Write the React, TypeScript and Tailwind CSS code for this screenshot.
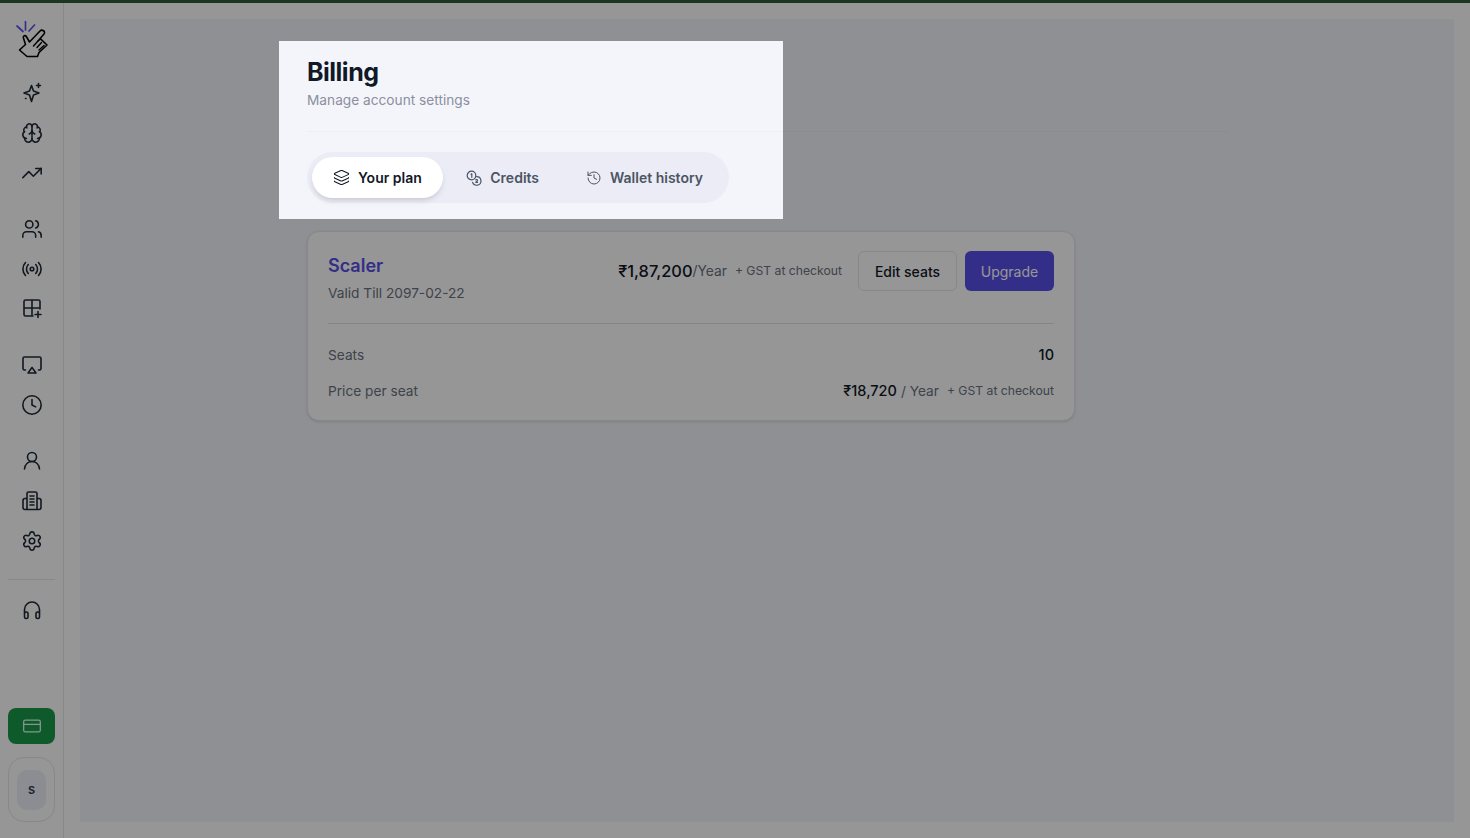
import React from "react";
import { Brain, TrendingUp, Users, Clock, Settings, CreditCard, Layers, History } from "lucide-react";

const ic = "w-[22px] h-[22px] text-[#1f2937]";

function Logo() {
  return (
    <svg width="36" height="40" viewBox="13.500 20 36 40" fill="none" strokeLinecap="round" strokeLinejoin="round">
      <path d="M16.500 26 22.500 31.500M25 21.700V30M34 25 28.500 31" stroke="#5b54f0" strokeWidth="1.700" />
      <path d="M19 50 25 44.500 22.800 37.500C22.500 35.800 24.800 35 25.800 36.500L29 42 39.500 31C41.500 28.800 45.500 31.500 43.500 34L37.500 41 40 38.800 46.500 45 38.500 52.500 37 56.500H26.500Z" stroke="#000" strokeWidth="1.600" />
      <path d="M37.500 41 33 46M41 42.500 36.500 47.500M43.500 45.500 38.500 50" stroke="#000" strokeWidth="1.400" />
    </svg>
  );
}

function Svg({ children, className }: { children: React.ReactNode; className?: string }) {
  return (
    <svg width="22" height="22" viewBox="-1 -1 22 22" fill="none" stroke="#1f2937" strokeWidth="1.600" strokeLinecap="round" strokeLinejoin="round" className={className}>
      {children}
    </svg>
  );
}

function Spark() {
  return (
    <Svg>
      <path d="M9.500 2.500 11.500 8 17 10 11.500 12 9.500 18.500 7.500 12 2 10 7.500 8Z" />
      <path d="M16.500 0.500v4M14.500 2.500h4M3.500 15.500h.5" />
    </Svg>
  );
}

function RadioIcon() {
  return (
    <Svg>
      <circle cx="10" cy="10" r="1.800" />
      <path d="M6.300 5.500a6.500 6.500 0 0 0 0 9M13.700 5.500a6.500 6.500 0 0 1 0 9M3.500 3.500a9.500 9.500 0 0 0 0 13M16.500 3.500a9.500 9.500 0 0 1 0 13" />
    </Svg>
  );
}

function GridPlus() {
  return (
    <Svg>
      <path d="M11 17H3.500A1.500 1.500 0 0 1 2 15.500v-13A1.500 1.500 0 0 1 3.500 1h13A1.500 1.500 0 0 1 18 2.500V10M2 9h16M10 1v16M16 12.500v6M13 15.500h6" />
    </Svg>
  );
}

function Airplay() {
  return (
    <Svg>
      <path d="M3.500 15H2.500A1.500 1.500 0 0 1 1 13.500v-10A1.500 1.500 0 0 1 2.500 2h15A1.500 1.500 0 0 1 19 3.500v10a1.500 1.500 0 0 1-1.500 1.500h-1M10 12.500l4 5.500H6l4-5.500Z" />
    </Svg>
  );
}

function UserIcon() {
  return (
    <Svg>
      <circle cx="10" cy="6" r="4.500" />
      <path d="M2.500 18c.5-4.500 3.500-7.500 7.500-7.500s7 3 7.500 7.500" />
    </Svg>
  );
}

function Building() {
  return (
    <Svg>
      <path d="M5 18.500V2.500A1.500 1.500 0 0 1 6.500 1h7A1.500 1.500 0 0 1 15 2.500v16M5 7.500H3A2 2 0 0 0 1 9.500v7a2 2 0 0 0 2 2h14a2 2 0 0 0 2-2v-7a2 2 0 0 0-2-2h-2M8 5h4M8 8h4M8 11h4M8 14h4" />
    </Svg>
  );
}

function Phones() {
  return (
    <Svg>
      <path d="M2.500 13V9.500a7.500 7.500 0 0 1 15 0V13" />
      <path d="M2.500 13.500A1.500 1.500 0 0 1 4 12h.5A1.500 1.500 0 0 1 6 13.500V17a1.500 1.500 0 0 1-1.500 1.500H4A1.500 1.500 0 0 1 2.500 17ZM17.500 13.500A1.500 1.500 0 0 0 16 12h-.5A1.500 1.500 0 0 0 14 13.500V17a1.500 1.500 0 0 0 1.500 1.500h.5a1.500 1.500 0 0 0 1.500-1.500Z" />
    </Svg>
  );
}

function Coins() {
  return (
    <svg width="16" height="16" viewBox="0 0 16 16" fill="none" stroke="#4b5563" strokeWidth="1.200" strokeLinecap="round" strokeLinejoin="round">
      <circle cx="5.500" cy="5.500" r="4.300" />
      <path d="M5 4.200l.8-.5v3.600M10.600 6.600a4.300 4.300 0 1 1-4 5.800M9.800 9.800a1 1 0 0 1 1.700.7c0 .6-1.700 1.800-1.700 1.800h1.800" />
    </svg>
  );
}

function NavGroup({ children }: { children: React.ReactNode }) {
  return <div className="flex flex-col gap-[18px] items-center">{children}</div>;
}

function Sidebar() {
  return (
    <aside className="w-[64px] shrink-0 border-r border-[#e5e7eb] bg-white flex flex-col items-center">
      <div className="mt-[17px] h-[40px] flex items-center justify-center">
        <Logo />
      </div>
      <div className="mt-[22px] flex flex-col items-center gap-[34px]">
        <NavGroup>
          <Spark />
          <Brain className={ic} strokeWidth={1.7} />
          <TrendingUp className={ic} strokeWidth={1.7} />
        </NavGroup>
        <NavGroup>
          <Users className={ic} strokeWidth={1.7} />
          <RadioIcon />
          <GridPlus />
        </NavGroup>
        <NavGroup>
          <Airplay />
          <Clock className={ic} strokeWidth={1.7} />
        </NavGroup>
        <NavGroup>
          <UserIcon />
          <Building />
          <Settings className={ic} strokeWidth={1.7} />
        </NavGroup>
      </div>
      <div className="w-[47px] h-px bg-[#e5e7eb] mt-[27px]" />
      <div className="mt-[19px]">
        <Phones />
      </div>
      <div className="mt-auto w-[47px] h-[36px] rounded-[8px] bg-[#189a4a] flex items-center justify-center">
        <CreditCard className="w-[20px] h-[20px] text-[#e6fff0]" strokeWidth={1.5} />
      </div>
      <div className="mt-[13px] mb-[16px] w-[47px] h-[65px] rounded-[16px] border border-[#e5e7eb] flex items-center justify-center">
        <div className="w-[29px] h-[40px] rounded-[10px] bg-[#eeeefa] flex items-center justify-center text-[13px] font-semibold text-[#374151]">s</div>
      </div>
    </aside>
  );
}

function Tab({ active, icon, label }: { active?: boolean; icon: React.ReactNode; label: string }) {
  return (
    <div className={`h-[41px] rounded-full flex items-center gap-[8px] text-[14px] font-semibold ${active ? "bg-white shadow-md text-[#111827] px-[21px]" : "text-[#4b5563] px-[23.500px]"}`}>
      {icon}
      <span>{label}</span>
    </div>
  );
}

export default function App() {
  return (
    <div className="relative h-screen w-full overflow-hidden flex flex-col bg-white text-[#111827]" style={{ fontFamily: "Inter, 'Noto Sans', sans-serif" }}>
      <div className="h-[3px] shrink-0 bg-[#2f5a36]" />
      <div className="flex flex-1 min-h-0">
        <Sidebar />
        <main className="flex-1 min-w-0 my-[16px] mx-[16px] bg-[#f4f5fb] pl-[227px]">
          <div className="w-[920px]">
            <div className="pt-[35px] border-b border-[#eceef4] h-[113px]">
              <h1 className="text-[25px] leading-[36px] font-bold tracking-[-0.5px] text-[#111827]">Billing</h1>
              <p className="text-[13.700px] leading-[20px] text-[#8b8f9e]">Manage account settings</p>
            </div>
            <div className="mt-[20px] w-fit h-[51px] rounded-full bg-[#ebecf6] flex items-center pl-[5px] pr-[3px]">
              <Tab active icon={<Layers className="w-[17px] h-[17px]" strokeWidth={1.5} />} label="Your plan" />
              <Tab icon={<Coins />} label="Credits" />
              <Tab icon={<History className="w-[16px] h-[16px]" strokeWidth={1.5} />} label="Wallet history" />
            </div>
          </div>
          <section className="mt-[28px] w-[768px] h-[190px] rounded-[12px] bg-white border border-[#e5e7eb] shadow-sm px-[20px]">
            <div className="flex items-start justify-between pt-[19px] h-[92px] border-b border-[#e0e2e8]">
              <div>
                <h2 className="text-[18px] leading-[28px] mt-[1px] font-semibold text-[#5850e8]">Scaler</h2>
                <p className="text-[13.700px] leading-[20px] mt-[3px] text-[#6b7280]">Valid Till 2097-02-22</p>
              </div>
              <div className="flex items-center">
                <span className="text-[16.400px] font-medium text-[#111827]">₹1,87,200</span>
                <span className="text-[13.800px] text-[#6b7280]">/Year</span>
                <span className="ml-[8px] mt-[1px] text-[12.200px] text-[#6b7280]">+ GST at checkout</span>
                <button className="ml-[16px] h-[40px] w-[99px] rounded-[6px] border border-[#e5e7eb] text-[14px] font-medium text-[#111827]">Edit seats</button>
                <button className="ml-[8px] h-[40px] w-[89px] rounded-[6px] bg-[#5850e8] text-[14px] font-normal text-white">Upgrade</button>
              </div>
            </div>
            <div className="flex justify-between items-center mt-[21px] h-[20px]">
              <span className="text-[13.700px] text-[#6b7280]">Seats</span>
              <span className="text-[14.500px] font-medium text-[#111827]">10</span>
            </div>
            <div className="flex justify-between items-center mt-[16px] h-[20px]">
              <span className="text-[13.700px] text-[#6b7280]">Price per seat</span>
              <span className="flex items-center">
                <span className="text-[14.500px] font-medium text-[#111827]">₹18,720</span>
                <span className="ml-[4px] text-[13.700px] text-[#6b7280]">/ Year</span>
                <span className="ml-[8px] mt-[1px] text-[12.200px] text-[#6b7280]">+ GST at checkout</span>
              </span>
            </div>
          </section>
        </main>
      </div>
      <div className="absolute left-[279px] top-[41px] w-[504px] h-[178px] shadow-[0_0_0_3000px_rgba(0,0,0,0.41)]" />
    </div>
  );
}
